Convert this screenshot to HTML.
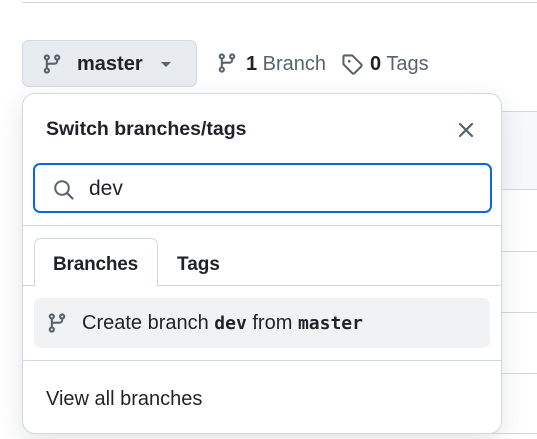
<!DOCTYPE html>
<html><head><style>
*{box-sizing:border-box;margin:0;padding:0}
body{width:537px;height:439px;background:#fff;position:relative;overflow:hidden;font-family:"Liberation Sans",sans-serif;color:#1f2328}
.abs{position:absolute}
svg{display:block}
</style></head><body>
<div class="abs" style="left:22px;top:2px;width:515px;height:1px;background:#d1d9e0"></div>
<div class="abs" style="left:480px;top:111px;width:57px;height:323px;border-left:1px solid #d1d9e0;border-bottom:1px solid #d1d9e0"></div>
<div class="abs" style="left:480px;top:111px;width:57px;height:79px;background:#f6f8fa;border-top:1px solid #d1d9e0;border-bottom:1px solid #d1d9e0"></div>
<div class="abs" style="left:480px;top:251px;width:57px;height:1px;background:#d1d9e0"></div>
<div class="abs" style="left:480px;top:312px;width:57px;height:1px;background:#d1d9e0"></div>
<div class="abs" style="left:480px;top:373px;width:57px;height:1px;background:#d1d9e0"></div>

<div class="abs" style="left:22px;top:40px;width:175px;height:47px;background:#e8ebef;border:1px solid #d1d9e0;border-radius:7px"></div>
<svg class="abs" style="left:41px;top:53px" width="22" height="22" viewBox="0 0 16 16"><path fill="#59636e" d="M9.5 3.25a2.25 2.25 0 1 1 3 2.122V6A2.5 2.5 0 0 1 10 8.5H6a1 1 0 0 0-1 1v1.128a2.251 2.251 0 1 1-1.5 0V5.372a2.25 2.25 0 1 1 1.5 0v1.836A2.493 2.493 0 0 1 6 7h4a1 1 0 0 0 1-1v-.628A2.25 2.25 0 0 1 9.5 3.25Zm-6 0a.75.75 0 1 0 1.5 0 .75.75 0 0 0-1.5 0Zm8.25-.75a.75.75 0 1 0 0 1.5.75.75 0 0 0 0-1.5ZM4.25 12a.75.75 0 1 0 0 1.5.75.75 0 0 0 0-1.5Z"/></svg>
<div class="abs" style="left:77px;top:52px;font-size:20px;font-weight:bold;line-height:24px">master</div>
<div class="abs" style="left:161px;top:62px;width:0;height:0;border-left:5px solid transparent;border-right:5px solid transparent;border-top:5px solid #59636e"></div>

<svg class="abs" style="left:216px;top:52px" width="22" height="22" viewBox="0 0 16 16"><path fill="#59636e" d="M9.5 3.25a2.25 2.25 0 1 1 3 2.122V6A2.5 2.5 0 0 1 10 8.5H6a1 1 0 0 0-1 1v1.128a2.251 2.251 0 1 1-1.5 0V5.372a2.25 2.25 0 1 1 1.5 0v1.836A2.493 2.493 0 0 1 6 7h4a1 1 0 0 0 1-1v-.628A2.25 2.25 0 0 1 9.5 3.25Zm-6 0a.75.75 0 1 0 1.5 0 .75.75 0 0 0-1.5 0Zm8.25-.75a.75.75 0 1 0 0 1.5.75.75 0 0 0 0-1.5ZM4.25 12a.75.75 0 1 0 0 1.5.75.75 0 0 0 0-1.5Z"/></svg>
<div class="abs" style="left:246px;top:52px;font-size:20px;line-height:24px;color:#59636e"><b style="color:#1f2328">1</b> Branch</div>
<svg class="abs" style="left:341px;top:53px" width="22" height="22" viewBox="0 0 16 16"><path fill="#59636e" d="M1 7.775V2.75C1 1.784 1.784 1 2.75 1h5.025c.464 0 .91.184 1.238.513l6.25 6.250a1.750 1.750 0 0 1 0 2.474l-5.026 5.026a1.750 1.750 0 0 1-2.474 0l-6.25-6.25A1.752 1.752 0 0 1 1 7.775Zm1.5 0c0 .066.026.13.073.177l6.25 6.25a.25.25 0 0 0 .354 0l5.025-5.025a.25.25 0 0 0 0-.354l-6.25-6.25a.25.25 0 0 0-.177-.073H2.75a.25.25 0 0 0-.25.25ZM6 5a1 1 0 1 1 0 2 1 1 0 0 1 0-2Z"/></svg>
<div class="abs" style="left:370px;top:52px;font-size:20px;line-height:24px;color:#59636e"><b style="color:#1f2328">0</b> Tags</div>

<div class="abs" style="left:22px;top:93px;width:480px;height:341px;background:#fff;border:1px solid #d1d9e0;border-radius:13px;box-shadow:0 8px 24px rgba(66,74,83,.14)"></div>
<div class="abs" style="left:46px;top:117px;font-size:19.5px;font-weight:bold;line-height:24px">Switch branches/tags</div>
<svg class="abs" style="left:457px;top:121px" width="18" height="18" viewBox="0 0 18 18"><path d="M3 3L15 15M15 3L3 15" stroke="#59636e" stroke-width="2.2" stroke-linecap="round"/></svg>

<div class="abs" style="left:33px;top:163px;width:459px;height:50px;border:2px solid #0969da;border-radius:7px"></div>
<svg class="abs" style="left:53px;top:179px" width="22" height="22" viewBox="0 0 22 22"><circle cx="9" cy="9" r="6.8" fill="none" stroke="#59636e" stroke-width="2"/><path d="M14 14L19.5 19.5" stroke="#59636e" stroke-width="2.2" stroke-linecap="round"/></svg>
<div class="abs" style="left:89px;top:177px;font-size:21px;line-height:24px">dev</div>

<div class="abs" style="left:23px;top:225px;width:478px;height:1px;background:#d1d9e0"></div>
<div class="abs" style="left:23px;top:285px;width:478px;height:1px;background:#d1d9e0"></div>
<div class="abs" style="left:34px;top:238px;width:124px;height:48px;border:1px solid #d1d9e0;border-bottom:none;border-radius:7px 7px 0 0;background:#fff"></div>
<div class="abs" style="left:53px;top:253px;font-size:19px;font-weight:bold;line-height:24px;letter-spacing:-.2px">Branches</div>
<div class="abs" style="left:177px;top:253px;font-size:19px;font-weight:bold;line-height:24px">Tags</div>

<div class="abs" style="left:34px;top:298px;width:456px;height:50px;background:#f0f2f4;border-radius:7px"></div>
<svg class="abs" style="left:46px;top:312px" width="22" height="22" viewBox="0 0 16 16"><path fill="#59636e" d="M9.5 3.25a2.25 2.25 0 1 1 3 2.122V6A2.5 2.5 0 0 1 10 8.5H6a1 1 0 0 0-1 1v1.128a2.251 2.251 0 1 1-1.5 0V5.372a2.25 2.25 0 1 1 1.5 0v1.836A2.493 2.493 0 0 1 6 7h4a1 1 0 0 0 1-1v-.628A2.25 2.25 0 0 1 9.5 3.25Zm-6 0a.75.75 0 1 0 1.5 0 .75.75 0 0 0-1.5 0Zm8.25-.75a.75.75 0 1 0 0 1.5.75.75 0 0 0 0-1.5ZM4.25 12a.75.75 0 1 0 0 1.5.75.75 0 0 0 0-1.5Z"/></svg>
<div class="abs" style="left:82px;top:311px;font-size:20px;line-height:24px;white-space:nowrap">Create branch <b style="font-family:'DejaVu Sans Mono',monospace;font-size:18px">dev</b> from <b style="font-family:'DejaVu Sans Mono',monospace;font-size:18px">master</b></div>

<div class="abs" style="left:23px;top:360px;width:478px;height:1px;background:#d1d9e0"></div>
<div class="abs" style="left:46px;top:387px;font-size:20px;line-height:24px">View all branches</div>
</body></html>
